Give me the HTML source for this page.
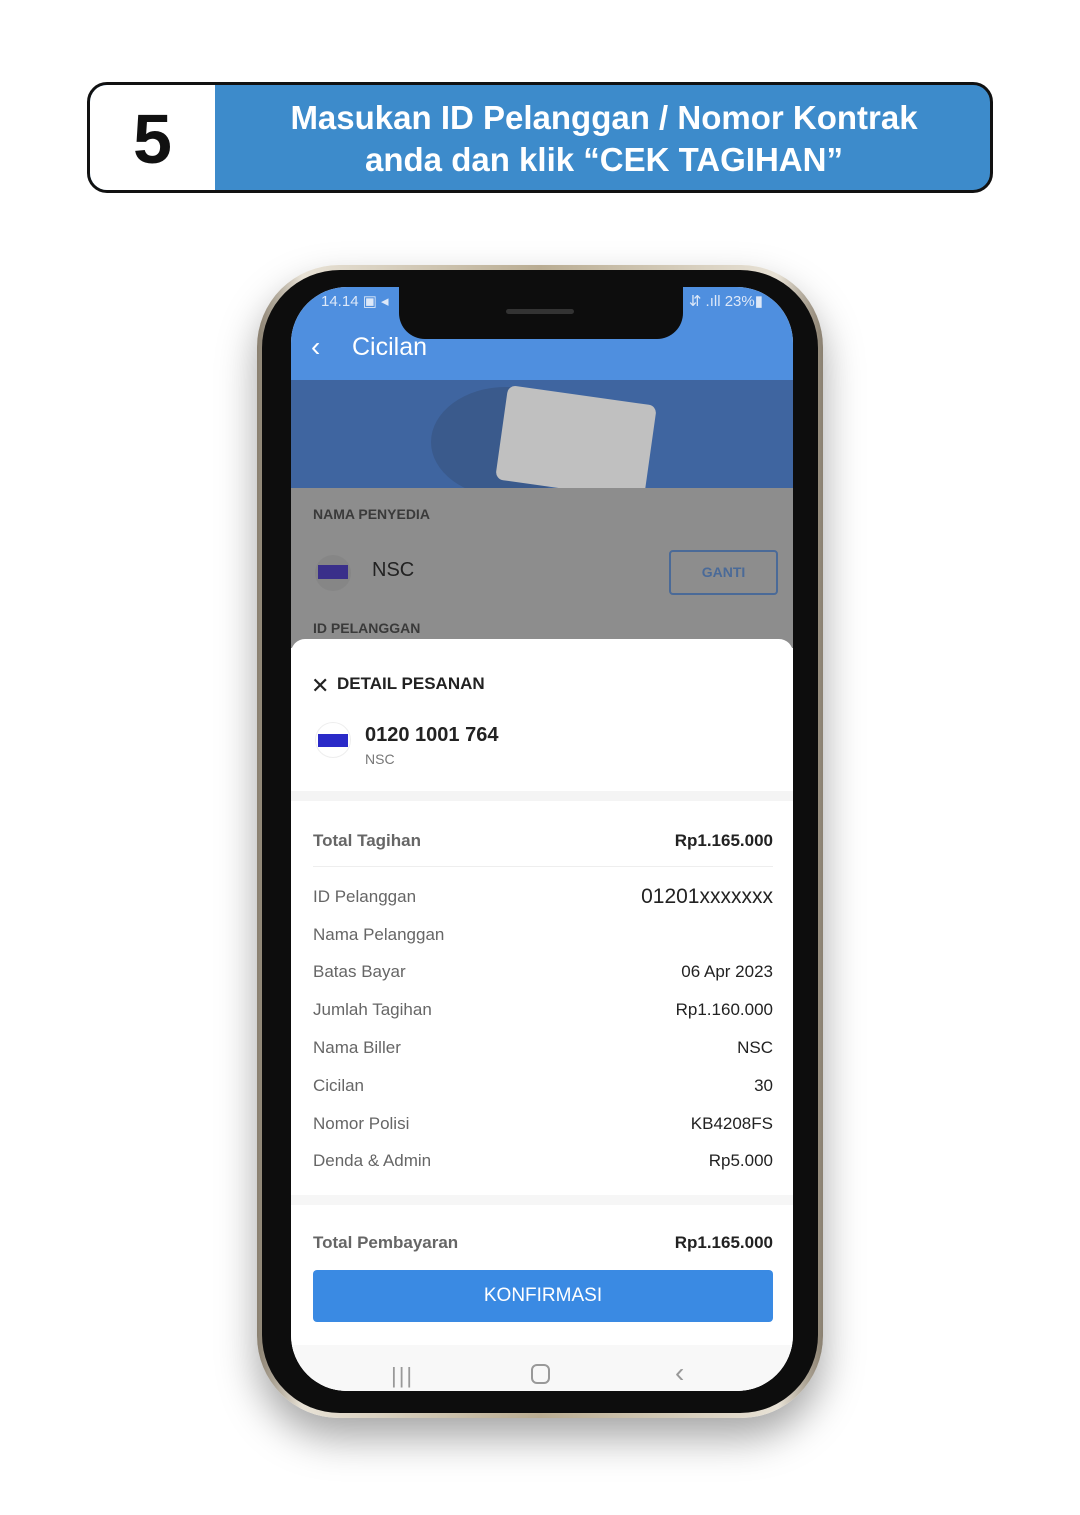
<!DOCTYPE html>
<html><head><meta charset="utf-8"><style>
*{margin:0;padding:0;box-sizing:border-box}
body{width:1080px;height:1515px;background:#fff;position:relative;overflow:hidden;font-family:"Liberation Sans",sans-serif}
.a{position:absolute}
.hdr{left:87px;top:82px;width:906px;height:111px;border:3px solid #111;border-radius:20px;overflow:hidden;background:#3d8bcb}
.num{left:0;top:0;width:125px;height:105px;background:#fff;font-size:70px;font-weight:bold;text-align:center;line-height:108px;color:#111}
.ttl{left:125px;top:12px;width:778px;text-align:center;color:#fff;font-weight:bold;font-size:33px;line-height:42px}
.phone{left:257px;top:265px;width:566px;height:1153px;border-radius:82px;background:linear-gradient(90deg,#8a8070,#e8e2d6 8%,#b9ac92 50%,#e8e2d6 92%,#8a8070);box-shadow:0 20px 40px rgba(0,0,0,.35)}
.bez{left:262px;top:270px;width:556px;height:1143px;border-radius:78px;background:#0d0d0d}
.scr{left:291px;top:287px;width:502px;height:1104px;border-radius:56px;overflow:hidden;background:#fff}
.row{position:absolute;left:22px;right:20px;font-size:17px;color:#666}
.row span{float:right;color:#222}
</style></head><body>
<div class="a hdr"><div class="a num">5</div><div class="a ttl">Masukan ID Pelanggan / Nomor Kontrak<br>anda dan klik “CEK TAGIHAN”</div></div>
<div class="a phone"></div>
<div class="a bez"></div>
<div class="a scr">
 <div class="a" style="left:0;top:0;width:502px;height:93px;background:#4f8fdf"></div>
 <div class="a" style="left:30px;top:5px;color:#dde8f8;font-size:15px">14.14 ▣ ◂</div>
 <div class="a" style="right:30px;top:5px;color:#dde8f8;font-size:15px">⇵ .ıll 23%▮</div>
 <div class="a" style="left:108px;top:0;width:284px;height:52px;background:#0d0d0d;border-radius:0 0 26px 26px"></div>
 <div class="a" style="left:215px;top:22px;width:68px;height:5px;background:#333;border-radius:3px"></div>
 <div class="a" style="left:20px;top:44px;color:#fff;font-size:28px">‹</div>
 <div class="a" style="left:61px;top:46px;color:#fff;font-size:25px">Cicilan</div>
 <div class="a" style="left:0;top:93px;width:502px;height:108px;background:#3f65a0"></div>
 <div class="a" style="left:140px;top:100px;width:150px;height:110px;border-radius:50%;background:#3a5a8c"></div>
 <div class="a" style="left:210px;top:108px;width:150px;height:95px;background:#c0c0c0;transform:rotate(8deg);border-radius:8px"></div>
 <div class="a" style="left:0;top:201px;width:502px;height:160px;background:#8d8d8d"></div>
 <div class="a" style="left:22px;top:219px;font-size:14px;font-weight:bold;color:#3a3a3a">NAMA PENYEDIA</div>
 <div class="a" style="left:24px;top:268px;width:36px;height:36px;border-radius:50%;background:#868686"></div>
 <div class="a" style="left:27px;top:278px;width:30px;height:14px;background:#3a2f8a"></div>
 <div class="a" style="left:81px;top:272px;font-size:20px;color:#222">NSC</div>
 <div class="a" style="left:378px;top:263px;width:109px;height:45px;border:2px solid #4a6a98;border-radius:4px;color:#4a6a98;font-weight:bold;font-size:14px;text-align:center;line-height:41px">GANTI</div>
 <div class="a" style="left:22px;top:333px;font-size:14px;font-weight:bold;color:#3a3a3a">ID PELANGGAN</div>
 <div class="a" style="left:0;top:352px;width:502px;height:760px;background:#fff;border-radius:14px 14px 0 0">
  <div class="a" style="left:20px;top:34px;font-size:22px;color:#222">✕</div>
  <div class="a" style="left:46px;top:35px;font-size:17px;font-weight:bold;color:#222">DETAIL PESANAN</div>
  <div class="a" style="left:24px;top:83px;width:36px;height:36px;border-radius:50%;border:1px solid #eee"></div>
  <div class="a" style="left:27px;top:95px;width:30px;height:13px;background:#2a2ac8"></div>
  <div class="a" style="left:74px;top:85px;font-size:20px;font-weight:bold;color:#222">0120 1001 764</div>
  <div class="a" style="left:74px;top:112px;font-size:14px;color:#777">NSC</div>
  <div class="a" style="left:0;top:152px;width:502px;height:10px;background:#f4f4f4"></div>
  <div class="row" style="top:192px;font-weight:bold">Total Tagihan<span style="font-weight:bold">Rp1.165.000</span></div>
  <div class="a" style="left:22px;right:20px;top:227px;height:1px;background:#eee"></div>
  <div class="row" style="top:248px">ID Pelanggan<span style="font-size:21px;margin-top:-2px">01201xxxxxxx</span></div>
  <div class="row" style="top:286px">Nama Pelanggan</div>
  <div class="row" style="top:323px">Batas Bayar<span>06 Apr 2023</span></div>
  <div class="row" style="top:361px">Jumlah Tagihan<span>Rp1.160.000</span></div>
  <div class="row" style="top:399px">Nama Biller<span>NSC</span></div>
  <div class="row" style="top:437px">Cicilan<span>30</span></div>
  <div class="row" style="top:475px">Nomor Polisi<span>KB4208FS</span></div>
  <div class="row" style="top:512px">Denda &amp; Admin<span>Rp5.000</span></div>
  <div class="a" style="left:0;top:556px;width:502px;height:10px;background:#f6f6f6"></div>
  <div class="row" style="top:594px;font-weight:bold">Total Pembayaran<span style="font-weight:bold">Rp1.165.000</span></div>
  <div class="a" style="left:22px;top:631px;width:460px;height:52px;background:#3a8ae3;border-radius:4px;color:#fff;font-size:19px;text-align:center;line-height:52px">KONFIRMASI</div>
  <div class="a" style="left:0;top:706px;width:502px;height:60px;background:#f8f8f8"></div>
  <div class="a" style="left:100px;top:724px;font-size:22px;color:#999;letter-spacing:2px">|||</div>
  <div class="a" style="left:240px;top:725px;width:19px;height:20px;border:2px solid #999;border-radius:6px"></div>
  <div class="a" style="left:384px;top:718px;font-size:28px;color:#999">‹</div>
 </div>
</div>
</body></html>
